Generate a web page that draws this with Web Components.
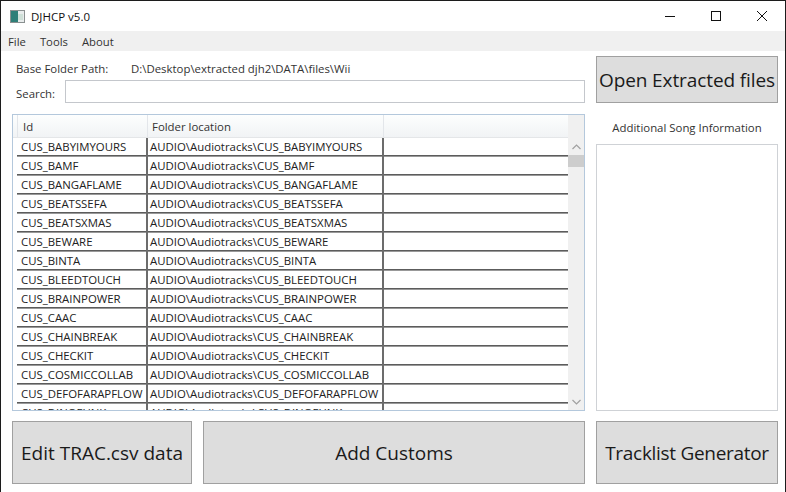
<!DOCTYPE html>
<html>
<head>
<meta charset="utf-8">
<title>DJHCP v5.0</title>
<style>
    html, body { margin: 0; padding: 0; background: #fff; overflow: hidden; }
    body { font-family: "Open Sans", "Noto Sans", sans-serif; color: #222; }
</style>
</head>
<body>
<app-window></app-window>

<script>
// Title bar with the window caption buttons
class TitleBar extends HTMLElement {
    constructor() {
        super();
        this.attachShadow({ mode: 'open' });
        this.shadowRoot.innerHTML = `
            <style>
                :host { display: flex; align-items: center; height: 30px; background: #fff; }
                .icon { margin-left: 9px; width: 15px; height: 13px; }
                .caption { margin-left: 6px; font-size: 11.5px; color: #111; }
                .buttons { margin-left: auto; display: flex; }
                .buttons div { width: 46px; height: 30px; display: flex; align-items: center; justify-content: center; }
            </style>
            <svg class="icon" viewBox="0 0 15 13">
                <rect x="0.5" y="0.5" width="14" height="12" fill="#e8ecec" stroke="#8a9090"/>
                <rect x="1" y="1" width="7" height="11" fill="#2f7f78"/>
                <rect x="8" y="4" width="5" height="6" fill="#cfe0d8"/>
            </svg>
            <span class="caption">DJHCP v5.0</span>
            <div class="buttons">
                <div><svg width="10" height="10"><path d="M0 5.5H10" stroke="#111"/></svg></div>
                <div><svg width="10" height="10"><rect x="0.5" y="0.5" width="9" height="9" fill="none" stroke="#111"/></svg></div>
                <div><svg width="10" height="10"><path d="M0 0L10 10M10 0L0 10" stroke="#111"/></svg></div>
            </div>
        `;
    }
}

class MenuBar extends HTMLElement {
    constructor() {
        super();
        this.attachShadow({ mode: 'open' });
        this.shadowRoot.innerHTML = `
            <style>
                :host { display: flex; gap: 14px; height: 20px; padding-left: 7px; align-items: center; background: #f0f0f0; font-size: 11.3px; color: #333; }
            </style>
            <span>File</span><span>Tools</span><span>About</span>
        `;
    }
}

class ActionButton extends HTMLElement {
    constructor() {
        super();
        this.attachShadow({ mode: 'open' });
        this.shadowRoot.innerHTML = `
            <style>
                :host { display: flex; align-items: center; justify-content: center; box-sizing: border-box; background: #dddddd; border: 1px solid #a0a0a0; font-size: 19px; color: #1a1a1a; white-space: nowrap; overflow: hidden; }
            </style>
            <slot></slot>
        `;
    }
}

class SongTable extends HTMLElement {
    constructor() {
        super();
        this.attachShadow({ mode: 'open' });
        const songs = ['BABYIMYOURS', 'BAMF', 'BANGAFLAME', 'BEATSSEFA', 'BEATSXMAS', 'BEWARE', 'BINTA', 'BLEEDTOUCH', 'BRAINPOWER', 'CAAC', 'CHAINBREAK', 'CHECKIT', 'COSMICCOLLAB', 'DEFOFARAPFLOW', 'DINOFUNK'];
        const rows = songs.map(s => `
            <div class="row">
                <div class="cell id">CUS_${s}</div>
                <div class="cell loc">AUDIO\\Audiotracks\\CUS_${s}</div>
                <div class="cell rest"></div>
            </div>`).join('');
        this.shadowRoot.innerHTML = `
            <style>
                :host { display: flex; box-sizing: border-box; border: 1px solid #b4c8dc; background: #fff; overflow: hidden; font-size: 11.4px; color: #222; }
                .grid { flex: 1; min-width: 0; overflow: hidden; }
                .head { display: flex; height: 23px; border-bottom: 1px solid #e4e6e8; box-sizing: border-box; background: linear-gradient(#fdfefe, #f1f3f5); color: #333; }
                .head div { box-sizing: border-box; border-right: 1px solid #e3e6ea; padding: 4px 0 0 4px; }
                .head .id { margin-left: 4px; width: 131px; border-left: 1px solid #e3e6ea; padding-left: 5px; }
                .head .loc { width: 236px; }
                /* grid lines are soft in the reference: dark pixel and a lighter one under it */
                .row { display: flex; height: 19px; margin-left: 4px; background: linear-gradient(transparent 17px, #5c5c5c 17px, #5c5c5c 18px, #999 18px); }
                .cell { box-sizing: border-box; white-space: nowrap; overflow: hidden; height: 19px; line-height: 18px; padding-left: 4px; }
                .id { width: 131px; border-right: 2px solid #6c6c6c; }
                .loc { width: 236px; border-right: 2px solid #6c6c6c; padding-left: 2px; }
                .rest { flex: 1; }
                .bar { width: 16px; flex: none; background: #f0f0f0; display: flex; flex-direction: column; align-items: center; }
                .arrow { height: 17px; flex: none; display: flex; align-items: center; justify-content: center; }
                .top-gap { height: 23px; flex: none; }
                .thumb { align-self: stretch; height: 12px; background: #cdcdcd; flex: none; }
                .track { flex: 1; }
            </style>
            <div class="grid">
                <div class="head">
                    <div class="id">Id</div>
                    <div class="loc">Folder location</div>
                </div>
                ${rows}
            </div>
            <div class="bar">
                <div class="top-gap"></div>
                <div class="arrow"><svg width="9" height="6"><path d="M0.5 5L4.5 1L8.5 5" fill="none" stroke="#a0a0a0" stroke-width="1.2"/></svg></div>
                <div class="thumb"></div>
                <div class="track"></div>
                <div class="arrow"><svg width="9" height="6"><path d="M0.5 1L4.5 5L8.5 1" fill="none" stroke="#a0a0a0" stroke-width="1.2"/></svg></div>
            </div>
        `;
    }
}

// The form part of the window: left column with table, right column with info box
class AppWindow extends HTMLElement {
    constructor() {
        super();
        this.attachShadow({ mode: 'open' });
        this.shadowRoot.innerHTML = `
            <style>
                :host { display: flex; flex-direction: column; box-sizing: border-box; width: 786px; height: 492px; border: 1px solid #1c1c1c; border-bottom: none; background: #fff; overflow: hidden; }
                .content { display: grid; grid-template-columns: 573px 182px; grid-template-rows: 48px 297px 63px; column-gap: 11px; row-gap: 10px; padding: 5px 0 0 11px; }
                .form { display: flex; flex-direction: column; font-size: 11.4px; color: #333; }
                .path { display: flex; height: 24px; align-items: center; padding-left: 4px; }
                .path span:first-child { width: 115px; }
                .search { display: flex; align-items: center; padding-left: 4px; height: 23px; }
                .search span { width: 49px; padding-top: 3px; }
                .search input { flex: 1; height: 23px; box-sizing: border-box; border: 1px solid #c4c7cc; background: #fff; padding: 0; margin: 0; }
                .top-btn { height: 47px; }
                .info { display: flex; flex-direction: column; font-size: 11.4px; color: #333; }
                .info-label { height: 30px; box-sizing: border-box; padding-bottom: 4px; display: flex; align-items: center; justify-content: center; }
                .info-box { flex: 1; box-sizing: border-box; border: 1px solid #cfd2d6; background: #fff; }
                .bottom { grid-column: 1; display: flex; gap: 11px; }
                .bottom action-button:first-child { width: 180px; }
                .bottom action-button:last-child { flex: 1; }
            </style>
            <title-bar></title-bar>
            <menu-bar></menu-bar>
            <div class="content">
                <div class="form">
                    <div class="path"><span>Base Folder Path:</span><span>D:\\Desktop\\extracted djh2\\DATA\\files\\Wii</span></div>
                    <div class="search"><span>Search:</span><input type="text"></div>
                </div>
                <action-button class="top-btn" style="letter-spacing: -0.1px">Open Extracted files</action-button>
                <song-table></song-table>
                <div class="info">
                    <div class="info-label">Additional Song Information</div>
                    <div class="info-box"></div>
                </div>
                <div class="bottom">
                    <action-button>Edit TRAC.csv data</action-button>
                    <action-button>Add Customs</action-button>
                </div>
                <action-button style="letter-spacing: -0.3px">Tracklist Generator</action-button>
            </div>
        `;
    }
}

customElements.define('title-bar', TitleBar);
customElements.define('menu-bar', MenuBar);
customElements.define('action-button', ActionButton);
customElements.define('song-table', SongTable);
customElements.define('app-window', AppWindow);
</script>
</body>
</html>
